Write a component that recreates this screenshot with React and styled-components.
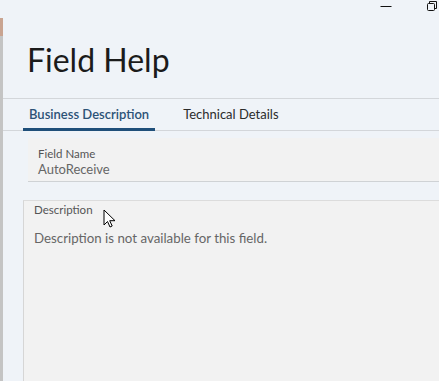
import styled, { createGlobalStyle } from 'styled-components';

const GlobalStyle = createGlobalStyle`
  html, body {
    margin: 0;
    padding: 0;
    width: 439px;
    height: 381px;
    overflow: hidden;
    background: #eff3f8;
    font-family: Lato, "Noto Sans", sans-serif;
  }
`;

const Screen = styled.div`
  position: relative;
  width: 439px;
  height: 381px;
  display: flex;
  flex-direction: column;
  background: #eff3f8;
`;

const TitleBar = styled.div`
  height: 18px;
  display: flex;
  justify-content: flex-end;
  align-items: flex-start;
  gap: 35px;
  padding-right: 2px;
  flex-shrink: 0;
`;

const WinButton = styled.div`
  width: ${(p) => p.$w}px;
  height: 12px;
  flex-shrink: 0;
  display: flex;
  align-items: center;
  justify-content: center;
  svg {
    display: block;
  }
`;

const Body = styled.div`
  flex: 1;
  display: flex;
  min-height: 0;
`;

const SideStrip = styled.div`
  width: 3px;
  background: linear-gradient(#c9a491 0px, #c9a491 18px, #c4c4c4 18px);
  flex-shrink: 0;
`;

const Dialog = styled.div`
  flex: 1;
  display: flex;
  flex-direction: column;
  min-width: 0;
`;

const Header = styled.div`
  height: 81px;
  box-sizing: border-box;
  border-bottom: 1px solid #d3d6da;
  padding: 22px 0 0 24px;
`;

const Title = styled.h1`
  margin: 0;
  font-size: 32px;
  font-weight: 400;
  color: #1b1b1b;
  line-height: 40px;
`;

const Tabs = styled.div`
  display: flex;
  height: 32px;
  box-sizing: border-box;
  border-bottom: 1px solid #d3d6da;
  padding-left: 20px;
  gap: 22px;
`;

const Tab = styled.div`
  padding: 1px 6px 0;
  display: flex;
  align-items: center;
  font-size: 13px;
  font-weight: ${(p) => (p.$active ? 600 : 400)};
  color: ${(p) => (p.$active ? '#2c5277' : '#2b2b2b')};
  border-bottom: 3px solid ${(p) => (p.$active ? '#1f4f7a' : 'transparent')};
  margin-bottom: -1px;
`;

const Content = styled.div`
  flex: 1;
  display: flex;
  flex-direction: column;
  padding: 7px 0 0 20px;
  gap: 18px;
`;

const FieldBox = styled.div`
  margin-left: 5px;
  background: #f2f2f2;
  border-bottom: 1px solid #cfd2d5;
  padding: 8px 10px 3px;
  display: flex;
  flex-direction: column;
`;

const Label = styled.div`
  font-size: 11.5px;
  color: #555;
  line-height: 15px;
`;

const Value = styled.div`
  font-size: 13px;
  color: #666;
  line-height: 17px;
`;

const DescBox = styled.div`
  position: relative;
  flex: 1;
  background: #f2f2f2;
  border-top: 1px solid #dcdcdc;
  border-left: 1px solid #d6d6d6;
  padding: 1px 10px;
`;

const DescText = styled.div`
  margin-top: 13px;
  font-size: 13.3px;
  color: #666;
`;

const Cursor = styled.svg`
  position: absolute;
  left: 79px;
  top: 8px;
`;

export default function App() {
  return (
    <Screen>
      <GlobalStyle />
      <TitleBar>
        <WinButton $w={12}>
          <svg width="12" height="12" viewBox="0 0 12 12">
            <path d="M0.5 6.5h11" stroke="#111" strokeWidth="1" />
          </svg>
        </WinButton>
        <WinButton $w={10}>
          <svg width="10" height="10" viewBox="0 0 10 10">
            <rect x="0.5" y="2.5" width="7" height="7" rx="1" fill="none" stroke="#111" />
            <path d="M2.5 2.5V0.5h7v7h-2" fill="none" stroke="#111" />
          </svg>
        </WinButton>
      </TitleBar>
      <Body>
        <SideStrip />
        <Dialog>
          <Header>
            <Title>Field Help</Title>
          </Header>
          <Tabs>
            <Tab $active>Business Description</Tab>
            <Tab>Technical Details</Tab>
          </Tabs>
          <Content>
            <FieldBox>
              <Label>Field Name</Label>
              <Value>AutoReceive</Value>
            </FieldBox>
            <DescBox>
              <Label>Description</Label>
              <DescText>Description is not available for this field.</DescText>
              <Cursor width="14" height="20" viewBox="0 0 14 20">
                <path
                  d="M1 1v15l3.5-3.5 2.5 5.5 2.2-1-2.5-5.3H12z"
                  fill="#fff"
                  stroke="#000"
                  strokeWidth="1"
                  strokeLinejoin="round"
                />
              </Cursor>
            </DescBox>
          </Content>
        </Dialog>
      </Body>
    </Screen>
  );
}
